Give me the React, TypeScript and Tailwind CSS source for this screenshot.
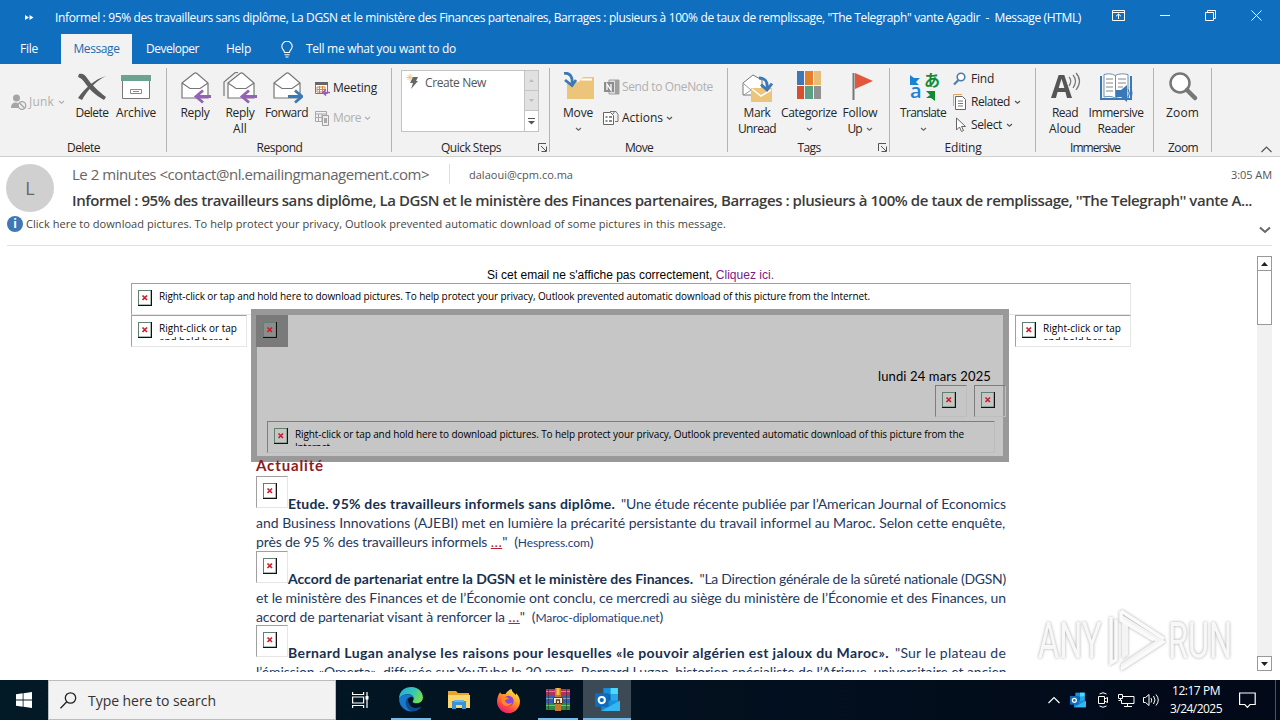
import React, { useLayoutEffect, useRef } from 'react';
import clsx from 'clsx';

type FitProps = { w: number; className?: string; children: React.ReactNode };

// One line of text, tracked in or out until it is w pixels wide.
const Fit: React.FC<FitProps> = ({ w, className, children }) => {
  const ref = useRef<HTMLSpanElement>(null);

  useLayoutEffect(() => {
    const el = ref.current;
    if (!el) return;
    el.style.letterSpacing = '0px';
    const count = (el.textContent || '').length;
    const natural = el.getBoundingClientRect().width;
    el.style.letterSpacing = `${(w - natural) / count}px`;
  }, [w, children]);

  return (
    <span ref={ref} className={clsx('inline-block shrink-0 whitespace-pre', className)}>
      {children}
    </span>
  );
};

const Caret = ({ className = 'text-[#666]' }: { className?: string }) => (
  <svg width="7" height="5" viewBox="0 0 7 5" className={clsx('shrink-0', className)}>
    <path d="M1 1l2.5 2.3L6 1" fill="none" stroke="currentColor" strokeWidth="1.2" />
  </svg>
);

/* ---------- ribbon icons ---------- */

const Envelope = () => (
  <>
    <path d="M3 11L15 1.5c1-.7 2-.7 3 0L29 11v15H3z" fill="#fff" stroke="#777" strokeWidth="1.2" />
    <path d="M3 11l8 5.500h10L29 11" fill="none" stroke="#777" strokeWidth="1.2" />
  </>
);

const BackArrow = () => (
  <path d="M32 24.500H18M24 18.500l-7 6 7 6" fill="none" stroke="#9560b8" strokeWidth="2.800" />
);

const DeleteIcon = () => (
  <svg width="32" height="32" viewBox="0 0 32 32">
    <path d="M3 2c4-1 6 1 8 4 4 6 11 13 19 19l-2 3C19 23 14 18 9 11 7 8 5 6 2 5z" fill="#5c5c5c" />
    <path d="M30 4C21 8 12 17 6 28l-4-2C9 16 19 7 30 4z" fill="#5c5c5c" />
  </svg>
);

const ArchiveIcon = () => (
  <svg width="32" height="32" viewBox="0 0 32 32">
    <path d="M2.500 8h27v18.500h-27z" fill="#fff" stroke="#777" />
    <path d="M1 3h30v6H1z" fill="#6ba292" />
    <path d="M10.500 17.500h11v4h-11z" fill="#fff" stroke="#888" />
    <path d="M13 19.500h6" stroke="#888" />
  </svg>
);

const ReplyIcon = () => (
  <svg width="32" height="32" viewBox="0 0 32 32">
    <Envelope />
    <BackArrow />
  </svg>
);

const ReplyAllIcon = () => (
  <svg width="34" height="32" viewBox="-2 0 34 32">
    <path d="M-1 24V10L10 .8c1-.6 2-.6 3 0" fill="none" stroke="#777" strokeWidth="1.200" />
    <Envelope />
    <BackArrow />
  </svg>
);

const ForwardIcon = () => (
  <svg width="32" height="32" viewBox="0 0 32 32">
    <Envelope />
    <path d="M17 24.500h13M24 18.500l7 6-7 6" fill="none" stroke="#3b78b8" strokeWidth="2.800" />
  </svg>
);

const MoveIcon = () => (
  <svg width="34" height="32" viewBox="0 0 34 32">
    <path d="M6 27V11l12-1 4-5h11v22z" fill="#ecc47a" />
    <path d="M21 6.500h10v2H20z" fill="#fff" />
    <path d="M3 1c6 0 9 3 8 12M4 8l7 5.500L15 8" fill="none" stroke="#3b78b8" strokeWidth="2.800" />
  </svg>
);

const MarkUnreadIcon = () => (
  <svg width="32" height="32" viewBox="0 0 32 32">
    <path d="M2 23V11L12 3l9 5v15z" fill="#fff" stroke="#777" />
    <path d="M3 12l7 6-7 5" fill="none" stroke="#999" />
    <path d="M10 16h21v14H10z" fill="#ecc47a" />
    <path d="M11 17l9 7 10-6" fill="none" stroke="#fff" strokeWidth="1.500" />
    <path d="M18 6c6 0 9 3 8 11M20 12.500l6 5.500 5-6.500" fill="none" stroke="#3b78b8" strokeWidth="2.800" />
  </svg>
);

const CategorizeIcon = () => (
  <div className="-mt-px grid h-[28px] w-[24px] grid-cols-3 grid-rows-2 gap-px">
    <i className="bg-[#3f76b5]" />
    <i className="bg-[#e67e30]" />
    <i className="bg-[#e8bd77]" />
    <i className="bg-[#d4502f]" />
    <i className="bg-[#5b9f85]" />
    <i className="bg-[#919191]" />
  </div>
);

const FlagIcon = () => (
  <svg width="32" height="32" viewBox="0 0 32 32">
    <path d="M9.500 1v27" stroke="#777" strokeWidth="2" />
    <path d="M11 1l18 8-18 8z" fill="#e3583c" />
  </svg>
);

const TranslateIcon = () => (
  <div className="relative h-8 w-8">
    <span className="absolute -right-px -top-[3px] font-['Noto_Sans_CJK_JP',sans-serif] text-[16px] font-bold leading-5 text-[#158a32]">あ</span>
    <span className="absolute -top-px left-[3px] mt-[10px] font-['Open_Sans',sans-serif] text-[20px] font-semibold leading-[20px] text-[#1683d8]">a</span>
    <svg width="32" height="32" viewBox="0 0 32 32" className="absolute inset-0">
      <path d="M3 3l4 3h6l-4 4 3 3H3z" fill="#1683d8" />
      <path d="M19 19h9v10l-4-3h-5l4-3z" fill="#138a32" />
    </svg>
  </div>
);

const ReadAloudIcon = () => (
  <div className="relative h-8 w-8">
    <span className="absolute left-[2px] top-[2px] origin-left scale-x-95 font-['Open_Sans',sans-serif] text-[32px] font-bold leading-[24px] text-[#555]">A</span>
    <svg width="32" height="32" viewBox="0 0 32 32" className="absolute inset-0">
      <path d="M20 5q3.500 4 0 9M24 3q5 6 0 13M27 1q7 8 0 17" fill="none" stroke="#777" strokeWidth="1.200" />
    </svg>
  </div>
);

const ImmersiveReaderIcon = () => (
  <svg width="34" height="32" viewBox="0 0 34 32">
    <path d="M1 4h2v22h28V4h2v24H1z" fill="#3b78b8" />
    <path d="M5 2.500c4-1 8-1 11 1 4-2 8-2 13-1V25c-5-1-9-1-13 1-3-2-7-2-11-1z" fill="#fff" stroke="#6f8fae" />
    <path d="M16.500 4v21M7 7h7M7 11h7M7 15h7M7 19h7M19 7h8M19 11h8M19 15h5" stroke="#888" />
    <path d="M17 18h5l6-5v17l-6-5h-5z" fill="#3b78b8" />
    <path d="M29 17q3 4 0 9M31 15q4 6 0 13" fill="none" stroke="#3b78b8" />
  </svg>
);

const ZoomIcon = () => (
  <svg width="32" height="32" viewBox="0 0 32 32">
    <circle cx="13" cy="11" r="9.500" fill="#fff" stroke="#777" strokeWidth="2.500" />
    <path d="M20 18l8 8" stroke="#777" strokeWidth="4.500" strokeLinecap="round" />
  </svg>
);

/* ---------- ribbon parts ---------- */

type BigProps = { className: string; icon: React.ReactNode; lines: [string, number][]; caret?: 'below' | 'side' };

const BigButton = ({ className, icon, lines, caret }: BigProps) => (
  <div className={clsx('flex shrink-0 flex-col items-center', className)}>
    <div className="flex h-[37px] items-start justify-center pt-1">{icon}</div>
    {lines.map(([text, w], i) => (
      <div key={text} className="flex h-4 items-center gap-1 leading-4">
        <Fit w={w}>{text}</Fit>
        {caret === 'side' && i === lines.length - 1 && <Caret />}
      </div>
    ))}
    {caret === 'below' && <div className="flex h-4 items-center"><Caret /></div>}
  </div>
);

const Group = ({ className, label, w, launcher, children }: { className: string; label: string; w: number; launcher?: boolean; children: React.ReactNode }) => (
  <div className={clsx('relative flex shrink-0 flex-col', className)}>
    <div className="flex h-[76px]">{children}</div>
    <div className="flex h-4 items-center justify-center leading-4">
      <Fit w={w}>{label}</Fit>
    </div>
    {launcher && (
      <svg width="9" height="9" viewBox="0 0 9 9" className="absolute bottom-[4px] right-[3px]">
        <path d="M.5 8V.5H8M3 3l5 5M8.500 3.500v5h-5" fill="none" stroke="#555" />
      </svg>
    )}
    <span className="absolute right-0 top-1 h-[84px] w-px bg-[#b4b4b4]" />
  </div>
);

const Ribbon = () => (
  <div className="relative flex h-[93px] border-b border-[#cfcfcf] bg-[#f2f2f2] text-[12px] text-[#262626]">
    <Group className="w-[167px]" label="Delete" w={33}>
      <div className="ml-[10px] mt-[30px] flex h-4 w-[62px] items-center gap-[2px] text-[#b0b0b0]">
        <svg width="17" height="17" viewBox="0 0 17 17" className="shrink-0">
          <circle cx="6.500" cy="4" r="3.500" fill="#a5a5a5" />
          <path d="M1 14c0-4 2-5.500 5-5.500l3 1-1 4.500z" fill="#a5a5a5" />
          <circle cx="12" cy="11.500" r="3.800" fill="#eee" stroke="#a5a5a5" strokeWidth="1.300" />
          <path d="M9.500 9l5 5" stroke="#a5a5a5" strokeWidth="1.300" />
        </svg>
        <Fit w={25}>Junk</Fit>
        <Caret className="ml-0.5 text-[#b0b0b0]" />
      </div>
      <BigButton className="mt-1 w-[40px]" icon={<DeleteIcon />} lines={[['Delete', 33]]} />
      <BigButton className="mt-1 w-[48px]" icon={<ArchiveIcon />} lines={[['Archive', 40]]} />
    </Group>

    <Group className="w-[225px]" label="Respond" w={46}>
      <BigButton className="ml-2 mt-1 w-[40px]" icon={<ReplyIcon />} lines={[['Reply', 29]]} />
      <BigButton className="mt-1 w-[50px]" icon={<ReplyAllIcon />} lines={[['Reply', 29], ['All', 14]]} />
      <BigButton className="mt-1 w-[43px]" icon={<ForwardIcon />} lines={[['Forward', 43]]} />
      <div className="ml-[6px] mt-[16px] flex flex-col gap-[14px]">
        <div className="flex h-4 items-center gap-[3px]">
          <svg width="16" height="15" viewBox="0 0 16 15">
            <path d="M1.500 2.500h12v10h-12z" fill="#fff" stroke="#777" />
            <path d="M1 1h13v3H1z" fill="#666" />
            <path d="M3 6h8v5H3zM5.500 5v7M8.500 5v7M3 8.500h8" fill="none" stroke="#d9823b" />
            <path d="M16 11.500H9M12 8.500l-3 3 3 3" fill="none" stroke="#9560b8" strokeWidth="1.600" />
          </svg>
          <Fit w={44}>Meeting</Fit>
        </div>
        <div className="flex h-4 items-center gap-[3px] text-[#b0b0b0]">
          <svg width="16" height="16" viewBox="0 0 16 16">
            <path d="M1.500 1.500h11v10h-11zM1 4h12M4.500 4v7M8 4v7M2 7.500h8" fill="none" stroke="#a8a8a8" />
            <path d="M8.500 5.500h6v10h-6z" fill="#eee" stroke="#a0a0a0" />
            <path d="M10 8h3v5h-3z" fill="#a8a8a8" />
          </svg>
          <Fit w={28}>More</Fit>
          <Caret className="text-[#b0b0b0]" />
        </div>
      </div>
    </Group>

    <Group className="w-[158px]" label="Quick Steps" w={60} launcher>
      <div className="ml-[9px] mt-[6px] flex h-[62px] w-[138px] border border-[#c3c3c3] bg-white text-[#555]">
        <div className="flex h-[23px] flex-1 items-center gap-[5px] pl-[4px]">
          <svg width="14" height="16" viewBox="0 0 14 16" className="-mt-1 shrink-0">
            <path d="M4 1v7M.5 4.500h7M1.500 2l5 5M6.500 2l-5 5" stroke="#edbd6b" strokeWidth=".8" />
            <path d="M7 4h5l-2 4h2l-7 8 2-6H4z" fill="#666" />
          </svg>
          <Fit w={61}>Create New</Fit>
        </div>
        <div className="flex w-[14px] flex-col border-l border-[#c3c3c3]">
          <div className="flex h-5 items-center justify-center border-b border-[#c3c3c3] bg-[#e1e1e1]">
            <svg width="5" height="3"><path d="M0 3L2.500 0 5 3z" fill="#bbb" /></svg>
          </div>
          <div className="flex h-5 items-center justify-center border-b border-[#c3c3c3] bg-[#e1e1e1]">
            <svg width="5" height="3"><path d="M0 0L2.500 3 5 0z" fill="#bbb" /></svg>
          </div>
          <div className="flex h-5 items-center justify-center">
            <svg width="7" height="7"><path d="M0 .5h7" stroke="#555" /><path d="M0 3h7L3.500 6.500z" fill="#555" /></svg>
          </div>
        </div>
      </div>
    </Group>

    <Group className="w-[178px]" label="Move" w={28}>
      <BigButton className="ml-2 mt-1 w-[40px]" icon={<MoveIcon />} lines={[['Move', 30]]} caret="below" />
      <div className="ml-[5px] mt-[15px] flex flex-col gap-[15px]">
        <div className="flex h-4 items-center gap-[2px] text-[#b0b0b0]">
          <svg width="17" height="16" viewBox="0 0 17 16">
            <path d="M6 1h10v14H6z" fill="#ddd" stroke="#a0a0a0" />
            <path d="M12 1h4v14h-4z" fill="#a0a0a0" />
            <path d="M1 3h10v10H1z" fill="#8d8d8d" />
            <path d="M4 11V5l4 6V5" fill="none" stroke="#fff" strokeWidth="1.300" />
          </svg>
          <Fit w={91}>Send to OneNote</Fit>
        </div>
        <div className="flex h-4 items-center gap-[3px]">
          <svg width="16" height="16" viewBox="0 0 16 16">
            <path d="M.5 2.500h7l3 3v9H.5z" fill="#fff" stroke="#666" />
            <path d="M2.500 7h2M2.500 11h2M6 7h3M6 11h3" stroke="#666" strokeWidth="1.300" />
            <path d="M7 1.500h6l2 3v7h-3M10 4l2-3" fill="none" stroke="#777" />
          </svg>
          <Fit w={41}>Actions</Fit>
          <Caret className="text-[#555]" />
        </div>
      </div>
    </Group>

    <Group className="w-[162px]" label="Tags" w={23} launcher>
      <BigButton className="ml-[5px] mt-1 w-[48px]" icon={<MarkUnreadIcon />} lines={[['Mark', 27], ['Unread', 38]]} />
      <BigButton className="mt-1 w-[56px]" icon={<CategorizeIcon />} lines={[['Categorize', 56]]} caret="below" />
      <BigButton className="mt-1 w-[46px]" icon={<FlagIcon />} lines={[['Follow', 35], ['Up', 14]]} caret="side" />
    </Group>

    <Group className="w-[146px]" label="Editing" w={37}>
      <BigButton className="ml-[7px] mt-1 w-[52px]" icon={<TranslateIcon />} lines={[['Translate', 46]]} caret="below" />
      <div className="ml-[4px] mt-[7px] flex flex-col gap-[7px]">
        <div className="flex h-4 items-center gap-[5px]">
          <svg width="13" height="14" viewBox="0 0 13 14">
            <circle cx="8" cy="5" r="3.800" fill="#fff" stroke="#4a7dab" strokeWidth="1.600" />
            <path d="M5.500 8L1 12.500" stroke="#4a7dab" strokeWidth="2.200" />
          </svg>
          <Fit w={23}>Find</Fit>
        </div>
        <div className="flex h-4 items-center gap-[4px]">
          <svg width="14" height="16" viewBox="0 0 14 16">
            <path d="M.5 12V.5H9" fill="none" stroke="#e0a25c" />
            <path d="M2.500 2.500h7l3 3v10h-10z" fill="#fff" stroke="#666" />
            <path d="M5 7h5M5 9.500h5M5 12h5" stroke="#777" />
          </svg>
          <Fit w={39}>Related</Fit>
          <Caret className="text-[#555]" />
        </div>
        <div className="flex h-4 items-center gap-[5px]">
          <svg width="13" height="16" viewBox="0 0 13 16">
            <path d="M3.500 1v12l3-3 2 4.500 2-1-2-4h4z" fill="#fff" stroke="#666" />
          </svg>
          <Fit w={31}>Select</Fit>
          <Caret className="-ml-px text-[#555]" />
        </div>
      </div>
    </Group>

    <Group className="w-[118px]" label="Immersive" w={50}>
      <BigButton className="ml-[7px] mt-1 w-[44px]" icon={<ReadAloudIcon />} lines={[['Read', 26], ['Aloud', 32]]} />
      <BigButton className="mt-1 w-[58px]" icon={<ImmersiveReaderIcon />} lines={[['Immersive', 55], ['Reader', 37]]} />
    </Group>

    <Group className="w-[58px]" label="Zoom" w={30}>
      <BigButton className="mt-1 w-[57px]" icon={<ZoomIcon />} lines={[['Zoom', 33]]} />
    </Group>

    <svg width="11" height="7" viewBox="0 0 11 7" className="absolute bottom-[3px] right-[8px]">
      <path d="M.5 6l5-5 5 5" fill="none" stroke="#555" strokeWidth="1.200" />
    </svg>
  </div>
);

const TitleBar = () => (
  <div className="h-[64px] bg-[#106ebe] text-[12px] text-white">
    <div className="flex h-[34px] items-center">
      <svg width="9" height="7" viewBox="0 0 9 7" className="ml-[25px] shrink-0">
        <path d="M0 1l4 2.500L0 6zM4.500 1l4 2.500-4 2.500z" fill="#fff" />
      </svg>
      <Fit w={1026} className="ml-[21px] mt-0.5">
        {'Informel : 95% des travailleurs sans diplôme, La DGSN et le ministère des Finances partenaires, Barrages : plusieurs à 100% de taux de remplissage, "The Telegraph" vante Agadir  -  Message (HTML)'}
      </Fit>
      <div className="mb-1 ml-[31px] flex items-center">
        <svg width="13" height="11" viewBox="0 0 13 11" fill="none" stroke="#fff">
          <path d="M.5.500h12v10H.5zM.5 2.500h12M6.500 9V4M4 6.300l2.500-2.300L9 6.300" />
        </svg>
        <span className="ml-[35px] h-px w-[10px] bg-white" />
        <svg width="11" height="11" viewBox="0 0 11 11" fill="none" stroke="#fff" className="ml-[35px]">
          <path d="M.5 2.500h8v8h-8zM2.500 2.500v-2h8v8h-2" />
        </svg>
        <svg width="11" height="11" viewBox="0 0 11 11" stroke="#fff" className="ml-[35px]">
          <path d="M.5.500l10 10M10.500.500l-10 10" />
        </svg>
      </div>
    </div>
    <div className="flex h-[30px] items-center">
      <Fit w={18} className="ml-5">File</Fit>
      <div className="ml-[23px] flex h-full w-[71px] items-center justify-center bg-[#f2f2f2] text-[#1a6ab3]">
        <Fit w={46}>Message</Fit>
      </div>
      <Fit w={53} className="ml-[14px]">Developer</Fit>
      <Fit w={25} className="ml-[27px]">Help</Fit>
      <svg width="12" height="17" viewBox="0 0 12 17" fill="none" stroke="#fff" strokeWidth="1.100" className="ml-[30px]">
        <path d="M3.500 11.500C3.500 9 .8 8.500.8 5.500a5.200 5.200 0 0110.400 0c0 3-2.700 3.500-2.700 6zM3.500 13.800h5M4.500 16h3" />
      </svg>
      <Fit w={150} className="ml-[13px]">Tell me what you want to do</Fit>
    </div>
  </div>
);

const MessageHeader = () => (
  <div className="relative flex h-[89px] shrink-0 flex-col">
    <div className="flex h-[56px] pl-[6px]">
      <div className="mt-[7px] flex size-[48px] items-center justify-center rounded-full bg-[#d0d0d0] text-[18px] text-[#666]">L</div>
      <div className="ml-[18px] flex flex-col">
        <div className="mt-[7px] flex h-5 items-center">
          <Fit w={357} className="text-[15px] text-[#666]">{'Le 2 minutes <contact@nl.emailingmanagement.com>'}</Fit>
          <span className="ml-5 h-5 w-px bg-[#dedede]" />
          <Fit w={104} className="ml-[19px] mt-[3px] text-[11px] text-[#555]">dalaoui@cpm.co.ma</Fit>
          <Fit w={41} className="ml-[658px] mt-[3px] text-[11px] text-[#555]">3:05 AM</Fit>
        </div>
        <Fit w={1180} className="mt-[5px] text-[15px] font-semibold leading-[22px] text-[#3b3b3b]">
          {"Informel : 95% des travailleurs sans diplôme, La DGSN et le ministère des Finances partenaires, Barrages : plusieurs à 100% de taux de remplissage, ''The Telegraph'' vante A..."}
        </Fit>
      </div>
    </div>
    <div className="flex h-[22px] items-center pl-[7px] text-[11px] text-[#444]">
      <div className="flex size-4 items-center justify-center rounded-full bg-[#3f78b5] text-[12px] font-bold leading-none text-white">i</div>
      <Fit w={700} className="ml-[3px]">
        Click here to download pictures. To help protect your privacy, Outlook prevented automatic download of some pictures in this message.
      </Fit>
    </div>
    <svg width="12" height="8" viewBox="0 0 12 8" className="absolute bottom-[12px] right-[9px]">
      <path d="M1 1.500l5 4.500 5-4.500" fill="none" stroke="#666" strokeWidth="2" />
    </svg>
    <div className="ml-[7px] mr-2 mt-auto h-px bg-[#e0e0e0]" />
  </div>
);

/* ---------- message body ---------- */

// The fill of the frame follows the text colour of the box around it.
const RedX = () => (
  <svg width="14" height="16" viewBox="0 0 14 16" className="shrink-0">
    <path d="M0 0h14v16H0z" fill="#111" />
    <path d="M0 0h13v15H0z" fill="#62806f" />
    <path d="M1 1h11.500v13.500H1z" className="fill-current" />
    <path d="M4.500 5.500l4.500 4.500M9 5.500L4.500 10" stroke="#c8202c" strokeWidth="1.700" />
  </svg>
);

const Blocked = ({ className, children }: { className: string; children?: React.ReactNode }) => (
  <div className={clsx('flex h-8 shrink-0 overflow-hidden border pl-[6px] pt-[6px]', className)}>
    <RedX />
    <div className="ml-[7px] h-[18px] overflow-hidden text-[10px] leading-[13px] text-black">{children}</div>
  </div>
);

const white = 'border-b-[#e6e6e6] border-l-[#a0a0a0] border-r-[#e6e6e6] border-t-[#a0a0a0] text-white';
const grey = 'border-b-[#bdbdbd] border-l-[#7d7d7d] border-r-[#bdbdbd] border-t-[#7d7d7d] text-[#c6c6c6]';

const SideCell = () => (
  <Blocked className={clsx('w-[116px]', white)}>
    <Fit w={78} className="block">Right-click or tap</Fit>
    <Fit w={70} className="block">and hold here t</Fit>
  </Blocked>
);

type ArticleProps = {
  className?: string;
  lead: string;
  leadWidth: number;
  tail: string;
  lines: React.ReactNode[];
  widths: number[];
};

const Article = ({ className, lead, leadWidth, tail, lines, widths }: ArticleProps) => (
  <div className={clsx('text-[14px] leading-[19px] text-[#1f3a5f]', className)}>
    <div className="flex h-[37px]">
      <Blocked className={clsx('w-8', white)} />
      <div className="mt-[18px] flex w-[718px] justify-between">
        <Fit w={leadWidth} className="font-bold text-[#17304f]">{lead}</Fit>
        <Fit w={718 - leadWidth - 6}>{tail}</Fit>
      </div>
    </div>
    {lines.map((line, i) => (
      <div key={i} className="h-[19px]">
        <Fit w={widths[i]}>{line}</Fit>
      </div>
    ))}
  </div>
);

const More = () => <span className="tracking-[0.5px] text-[#b5202a] underline">...</span>;

const Body = () => (
  <div className="flex h-[434px] shrink-0">
    <div className="h-[426px] flex-1 overflow-hidden">
      <div className="mt-[21px] flex h-4 justify-center font-['Liberation_Sans',sans-serif] text-[12px] leading-[17px] text-black">
        <Fit w={287} className="ml-1">
          Si cet email ne s'affiche pas correctement, <span className="text-[#7b2082]">Cliquez ici.</span>
        </Fit>
      </div>
      <div className="ml-[131px] w-[1000px]">
        <Blocked className={clsx('w-[1000px]', white)}>
          <Fit w={711}>
            Right-click or tap and hold here to download pictures. To help protect your privacy, Outlook prevented automatic download of this picture from the Internet.
          </Fit>
        </Blocked>
        <div className="flex">
          <SideCell />
          <div className="relative -mt-[6px] ml-[4px] mr-[6px] flex h-[153px] w-[758px] flex-col border-[6px] border-[#999] bg-[#c6c6c6]">
            <div className="-ml-px h-8 w-8 bg-[#7a7a7a]">
              <Blocked className="w-8 border-[#7a7a7a] text-[#8d8d8d]" />
            </div>
            <div className="mt-[20px] flex h-[18px] justify-end pr-[12px] font-['Lato',sans-serif] text-[13px] leading-[18px] text-black">
              <Fit w={113}>lundi 24 mars 2025</Fit>
            </div>
            <div className="-mr-[3px] flex justify-end gap-[7px]">
              <Blocked className={clsx('w-8', grey)} />
              <Blocked className={clsx('w-8', grey)} />
            </div>
            <div className="ml-[10px] mt-1">
              <Blocked className={clsx('w-[728px]', grey)}>
                <Fit w={669} className="block">
                  Right-click or tap and hold here to download pictures. To help protect your privacy, Outlook prevented automatic download of this picture from the
                </Fit>
                <Fit w={37} className="block">Internet.</Fit>
              </Blocked>
            </div>
          </div>
          <SideCell />
        </div>
      </div>
      <div className="relative ml-[256px] w-[750px] font-['Lato',sans-serif]">
        <div className="-mt-[6px] h-5 text-[15px] font-bold leading-[19px] text-[#8e1a22]">
          <Fit w={68}>Actualité</Fit>
        </div>
        <Article
          className="h-[75px]"
          lead="Etude. 95% des travailleurs informels sans diplôme."
          leadWidth={327}
          tail={'"Une étude récente publiée par l’American Journal of Economics'}
          lines={[
            'and Business Innovations (AJEBI) met en lumière la précarité persistante du travail informel au Maroc. Selon cette enquête,',
            <>près de 95 % des travailleurs informels <More />"  (<span className="text-[12px] text-[#1f3f7a]">Hespress.com</span>)</>,
          ]}
          widths={[749, 337]}
        />
        <Article
          className="h-[74px]"
          lead="Accord de partenariat entre la DGSN et le ministère des Finances."
          leadWidth={405}
          tail={'"La Direction générale de la sûreté nationale (DGSN)'}
          lines={[
            'et le ministère des Finances et de l’Économie ont conclu, ce mercredi au siège du ministère de l’Économie et des Finances, un',
            <>accord de partenariat visant à renforcer la <More />"  (<span className="text-[12px] text-[#1f3f7a]">Maroc-diplomatique.net</span>)</>,
          ]}
          widths={[750, 407]}
        />
        <Article
          className="h-[75px]"
          lead="Bernard Lugan analyse les raisons pour lesquelles «le pouvoir algérien est jaloux du Maroc»."
          leadWidth={601}
          tail={'"Sur le plateau de'}
          lines={['l’émission «Omerta», diffusée sur YouTube le 20 mars, Bernard Lugan, historien spécialiste de l’Afrique, universitaire et ancien']}
          widths={[750]}
        />
      </div>
    </div>
    <div className="mr-2 mt-[10px] flex h-[415px] w-[15px] flex-col bg-[#f1f1f1]">
      <div className="flex h-[15px] items-center justify-center border border-[#999] bg-white">
        <svg width="7" height="4"><path d="M0 4L3.500 0 7 4z" fill="#222" /></svg>
      </div>
      <div className="h-[54px] border border-t-0 border-[#999] bg-white" />
      <div className="mt-auto flex h-[15px] items-center justify-center border border-[#999] bg-white">
        <svg width="7" height="4"><path d="M0 0h7L3.500 4z" fill="#222" /></svg>
      </div>
    </div>
  </div>
);

const Watermark = () => (
  <div className="absolute left-[1038px] top-[607px] h-[68px] w-[198px] font-['Roboto',sans-serif] text-[50px] leading-[68px] text-[#f8f8f8] drop-shadow-[0_0_1.5px_#aaa]">
    <span className="absolute left-0 top-0 origin-left scale-x-[0.65]">ANY</span>
    <svg width="60" height="68" viewBox="0 0 60 68" fill="none" stroke="#fafafa" className="absolute left-[69px] top-0">
      <path d="M15 8v44l6-4V19l27 15L14 57v7l45-29z" fill="#f4f4f4" stroke="none" />
      <path d="M14 4l43 28M14 4v9l33 20M14 62l43-28M4 10v46l5-3V13" strokeWidth="3.500" />
    </svg>
    <span className="absolute left-[130px] top-0 origin-left scale-x-[0.65]">RUN</span>
  </div>
);

/* ---------- taskbar ---------- */

const OutlookIcon = ({ size }: { size: number }) => (
  <svg width={size} height={size} viewBox="0 0 24 24">
    <path d="M8 1h14v17H8z" fill="#1490df" />
    <path d="M15 1h7v6h-7z" fill="#50d9ff" />
    <path d="M8 7h7v6H8z" fill="#0a64ad" />
    <path d="M15 7h7v6h-7z" fill="#28a8ea" />
    <path d="M6 13l9 5 9-5v10H6z" fill="#1a86d2" />
    <path d="M6 23l18-10v10z" fill="#35b8f1" />
    <path d="M0 6h13v13H0z" fill="#0f6cbd" />
    <circle cx="6.500" cy="12.500" r="3" fill="none" stroke="#fff" strokeWidth="1.900" />
  </svg>
);

const EdgeIcon = () => (
  <svg width="26" height="26" viewBox="0 0 24 24">
    <defs>
      <linearGradient id="edgeTop" x1="0" y1="0" x2="1" y2=".4">
        <stop offset="0" stopColor="#28a9e0" />
        <stop offset=".6" stopColor="#35c5b5" />
        <stop offset="1" stopColor="#6fdc5a" />
      </linearGradient>
    </defs>
    <path d="M1 12C1 5 6 1 12.500 1 19 1 23 6 23 10.500c0 3.500-3 5.500-6 5.500-2 0-3.500-.8-3.500-1.700 0-.7 1-1 1-2.800C14.500 9 12 7.500 9 7.500 5 7.500 2 9.500 1 12z" fill="url(#edgeTop)" />
    <path d="M1 12c1-3 4-4.500 7.500-4.500 3 0 6 1.500 6 4-.5-1-1.500-1.500-2.500-1.500-2 0-3.500 2-3.500 4.500 0 4 4 6.500 8 6.500 2 0 3.500-.8 5-1.800C19.500 22 16 23.500 12.500 23.500 6 23.500 1 18.500 1 12z" fill="#1779c9" />
    <path d="M9 10.500c-3 3-2.500 9.500 3 12.500 4 .5 7.500-1 9.500-3.800-7 3-12.500-.5-12.500-8.700z" fill="#104a8c" />
  </svg>
);

const FolderIcon = () => (
  <svg width="22" height="20" viewBox="0 0 22 20">
    <path d="M0 1h8l2 2h11v4H0z" fill="#e8a52e" />
    <path d="M0 5h22v13H0z" fill="#fbd669" />
    <path d="M4 11h14v8h-4v-4H8v4H4z" fill="#3b92d6" />
    <path d="M6 10h10v2H6z" fill="#67b5e8" />
  </svg>
);

const FirefoxIcon = () => (
  <svg width="25" height="25" viewBox="0 0 24 24">
    <defs>
      <linearGradient id="fox" x1=".8" y1="0" x2=".2" y2="1">
        <stop offset="0" stopColor="#fff04a" />
        <stop offset=".4" stopColor="#ff9a25" />
        <stop offset=".75" stopColor="#ff4048" />
        <stop offset="1" stopColor="#e31587" />
      </linearGradient>
    </defs>
    <path d="M4 4c.5 1 1 1.800 2 2 1-.3 2-.3 3 0 1-2 3-4 6-5 0 3 3 4 4 6l.5-2C22 8 23 10.500 23 13a11 11 0 01-22 0c0-3 1-6.500 3-9z" fill="url(#fox)" />
    <circle cx="12" cy="12.500" r="5" fill="#8a48d8" />
    <path d="M6 9c3-1 5 0 6.500 1.500-2 0-2.500 1-4 1.500 1 3 4 4 7 2-1 4-8 5-10 0-.5-2 0-3.500.5-5z" fill="#ff8a22" />
  </svg>
);

const WinrarIcon = () => (
  <svg width="24" height="23" viewBox="0 0 24 23">
    <path d="M0 1h24v7H0z" fill="#b5305c" />
    <path d="M0 8h24v7H0z" fill="#345fb0" />
    <path d="M0 15h24v7H0z" fill="#2f8a42" />
    <path d="M0 3.500h24M0 10.500h24M0 17.500h24" stroke="#ddd" strokeOpacity=".5" />
    <path d="M2.500 1v21M20.500 1v21" stroke="#222" strokeOpacity=".5" />
    <path d="M9 0h6v23H9z" fill="#c9772a" />
    <path d="M10.500 0h3v7h-3z" fill="#f2c34b" />
    <path d="M7.500 9.500h9v6h-9z" fill="#f3eee0" stroke="#5a3a18" />
    <path d="M10.500 15v-3h3v3" fill="none" stroke="#5a3a18" strokeWidth="1.300" />
  </svg>
);

const Task = ({ className, children }: { className: string; children: React.ReactNode }) => (
  <div className={clsx('flex h-10 shrink-0 items-center justify-center', className)}>{children}</div>
);

const Taskbar = () => (
  <div className="flex h-10 items-center bg-linear-to-r from-[#021a26] to-[#020919] text-white">
    <Task className="w-[48px]">
      <svg width="16" height="16" viewBox="0 0 16 16" fill="#fff">
        <path d="M0 2.200L6.700 1.300v6.200H0zM7.500 1.200L16 0v7.500H7.500zM0 8.400h6.700v6.300L0 13.800zM7.500 8.400H16V16l-8.500-1.200z" />
      </svg>
    </Task>
    <div className="flex h-10 w-[288px] items-center border border-[#bcbcbc] bg-[#f2f2f2] pl-[11px] text-[#333]">
      <svg width="17" height="17" viewBox="0 0 17 17" fill="none" stroke="#222" strokeWidth="1.300">
        <circle cx="10.500" cy="6" r="5.200" />
        <path d="M6.800 9.800L.5 16.300" />
      </svg>
      <Fit w={128} className="ml-[11px] text-[14px]">Type here to search</Fit>
    </div>
    <Task className="w-[48px]">
      <svg width="17" height="16" viewBox="0 0 17 16" fill="none" stroke="#fff" strokeWidth="1.200">
        <path d="M.6 0v2.500h11V0M.6 16v-2.500h11V16M.6 5h11v6H.6zM15 0v16" />
        <path d="M13.500 4h3v3.500h-3z" fill="#fff" stroke="none" />
      </svg>
    </Task>
    <Task className="ml-[7px] w-[40px] border-b-2 border-[#76b9ed]"><EdgeIcon /></Task>
    <Task className="ml-[4px] w-[48px]"><FolderIcon /></Task>
    <Task className="ml-[1px] w-[48px]"><FirefoxIcon /></Task>
    <Task className="ml-[6px] w-[40px] border-b-2 border-[#76b9ed]"><WinrarIcon /></Task>
    <Task className="ml-[5px] w-[48px] border-b-2 border-[#76b9ed] bg-[#3b4a54]"><OutlookIcon size={25} /></Task>

    <div className="ml-auto flex items-center">
      <svg width="12" height="8" viewBox="0 0 12 8" className="mr-[10px]">
        <path d="M.5 7L6 1.500 11.500 7" fill="none" stroke="#fff" strokeWidth="1.200" />
      </svg>
      <OutlookIcon size={16} />
      <svg width="12" height="16" viewBox="0 0 12 16" fill="none" stroke="#fff" className="ml-[11px]">
        <path d="M1.500 4.500h6v7h-6zM7.500 7l3-1.500v5l-3-1.500M2.500 2q3.500-2.500 7 0M2.500 14q3.500 2.500 7 0" />
      </svg>
      <svg width="17" height="15" viewBox="0 0 17 15" fill="none" stroke="#fff" className="ml-[9px]">
        <path d="M5 3.500h11v7H3.500V7M9.500 10.500v3M6 13.500h8M.5 1.500h4v4h-4zM2.500 5.500v2h-2" />
      </svg>
      <svg width="17" height="14" viewBox="0 0 17 14" fill="none" stroke="#fff" className="ml-[8px]">
        <path d="M.5 4.500h2l3.500-3v11l-3.500-3h-2zM8 5q1.500 2 0 4.500M10.500 3q3 4 0 8M13 1.500q4.500 5.500 0 11" />
      </svg>
      <div className="ml-[8px] flex w-[56px] flex-col items-center text-[12px] leading-[18px]">
        <Fit w={48}>12:17 PM</Fit>
        <Fit w={52}>3/24/2025</Fit>
      </div>
      <svg width="17" height="17" viewBox="0 0 17 17" fill="none" stroke="#fff" strokeWidth="1.200" className="ml-[15px]">
        <path d="M.6 1h15.600v11.500h-5.200l-2.600 2.800-2.600-2.800H.6z" />
      </svg>
      <span className="ml-[19px] mr-1 h-10 w-px bg-[#4a5560]" />
    </div>
  </div>
);

export default function App() {
  return (
    <div className="relative flex h-[720px] w-[1280px] flex-col overflow-hidden bg-white font-['Open_Sans',sans-serif]">
      <TitleBar />
      <Ribbon />
      <MessageHeader />
      <Body />
      <Taskbar />
      <Watermark />
    </div>
  );
}
